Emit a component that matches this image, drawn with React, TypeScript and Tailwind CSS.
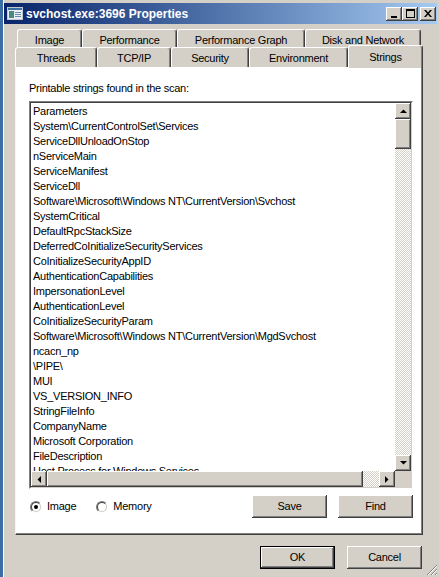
const face = "font-['Liberation_Sans',Arial,sans-serif] text-[11px] tracking-[-0.25px] text-black";

const strings = [
  "Parameters",
  "System\\CurrentControlSet\\Services",
  "ServiceDllUnloadOnStop",
  "nServiceMain",
  "ServiceManifest",
  "ServiceDll",
  "Software\\Microsoft\\Windows NT\\CurrentVersion\\Svchost",
  "SystemCritical",
  "DefaultRpcStackSize",
  "DeferredCoInitializeSecurityServices",
  "CoInitializeSecurityAppID",
  "AuthenticationCapabilities",
  "ImpersonationLevel",
  "AuthenticationLevel",
  "CoInitializeSecurityParam",
  "Software\\Microsoft\\Windows NT\\CurrentVersion\\MgdSvchost",
  "ncacn_np",
  "\\PIPE\\",
  "MUI",
  "VS_VERSION_INFO",
  "StringFileInfo",
  "CompanyName",
  "Microsoft Corporation",
  "FileDescription",
  "Host Process for Windows Services",
];

const topTabs = [
  { label: "Image", w: "w-[65px]" },
  { label: "Performance", w: "w-[95px]" },
  { label: "Performance Graph", w: "w-[128px]" },
  { label: "Disk and Network", w: "w-[116px]" },
];

const bottomTabs = [
  { label: "Threads", w: "w-[82px]" },
  { label: "TCP/IP", w: "w-[74px]" },
  { label: "Security", w: "w-[78px]" },
  { label: "Environment", w: "w-[99px]" },
];

// classic 3D bevel
const raised =
  "bg-[#d4d0c8] shadow-[inset_-1px_-1px_#404040,inset_1px_1px_#ffffff,inset_-2px_-2px_#808080]";

const Arrow = ({ dir }: { dir: "up" | "down" | "left" | "right" }) => {
  const pts = {
    up: "0,4 7,4 3.5,0.5",
    down: "0,0 7,0 3.5,3.5",
    left: "4,0 4,7 0.5,3.5",
    right: "0,0 0,7 3.5,3.5",
  }[dir];
  const vert = dir === "up" || dir === "down";
  return (
    <svg width={vert ? 7 : 4} height={vert ? 4 : 7} viewBox={vert ? "0 0 7 4" : "0 0 4 7"}>
      <polygon points={pts} fill="#000" />
    </svg>
  );
};

const ScrollBtn = ({ dir }: { dir: "up" | "down" | "left" | "right" }) => (
  <div className={`w-[16px] h-[16px] shrink-0 flex items-center justify-center ${raised}`}>
    <Arrow dir={dir} />
  </div>
);

const Track = ({ className = "" }: { className?: string }) => (
  <div
    className={`bg-[image:repeating-conic-gradient(#d4d0c8_0_25%,#ffffff_0_50%)] bg-[length:2px_2px] ${className}`}
  />
);

const Radio = ({ checked, label }: { checked?: boolean; label: string }) => (
  <div className="flex items-center gap-[5px]">
    <div className="w-[12px] h-[12px] rounded-full border border-t-[#808080] border-l-[#808080] border-b-[#ffffff] border-r-[#ffffff] bg-[#d4d0c8] flex items-center justify-center">
      <div className="w-[10px] h-[10px] rounded-full border border-t-[#404040] border-l-[#404040] border-b-[#d4d0c8] border-r-[#d4d0c8] bg-white flex items-center justify-center">
        {checked && <div className="w-[4px] h-[4px] rounded-full bg-black" />}
      </div>
    </div>
    <span>{label}</span>
  </div>
);

const Button = ({ label, isDefault }: { label: string; isDefault?: boolean }) => (
  <div className={`w-[75px] h-[23px] ${isDefault ? "border border-black" : ""}`}>
    <div className={`w-full h-full flex items-center justify-center ${raised}`}>{label}</div>
  </div>
);

const TitleIcon = () => (
  <svg width="16" height="13" viewBox="0 0 16 13">
    <rect x="0.5" y="0.5" width="15" height="12" fill="#e8eef4" stroke="#c0c8d0" />
    <rect x="1" y="1" width="14" height="2" fill="#3a6ea5" />
    <rect x="2" y="4" width="5" height="7" fill="#4a8a7a" />
    <rect x="8" y="5" width="6" height="1" fill="#6a8aa8" />
    <rect x="8" y="7" width="6" height="1" fill="#6a8aa8" />
    <rect x="8" y="9" width="6" height="1" fill="#6a8aa8" />
  </svg>
);

const CaptionBtn = ({ kind }: { kind: "min" | "max" | "close" }) => (
  <div className={`w-[16px] h-[14px] flex items-center justify-center ${raised}`}>
    {kind === "min" && (
      <svg width="8" height="9" viewBox="0 0 8 9">
        <rect x="1" y="7" width="6" height="2" fill="#000" />
      </svg>
    )}
    {kind === "max" && (
      <svg width="9" height="9" viewBox="0 0 9 9">
        <rect x="0.5" y="0.5" width="8" height="8" fill="none" stroke="#000" />
        <rect x="0" y="0" width="9" height="2" fill="#000" />
      </svg>
    )}
    {kind === "close" && (
      <svg width="8" height="7" viewBox="0 0 8 7">
        <path d="M0 0h2l2 2.5L6 0h2L5 3.5 8 7H6L4 4.5 2 7H0l3-3.5z" fill="#000" />
      </svg>
    )}
  </div>
);

const Tab = ({ label, w, h, pt }: { label: string; w: string; h: string; pt: string }) => (
  <div
    className={`${w} ${h} ${pt} shrink-0 flex justify-center items-center rounded-t-[3px] border-l border-t border-l-white border-t-white border-r border-r-[#404040] shadow-[inset_-1px_0_#808080] bg-[#d4d0c8]`}
  >
    {label}
  </div>
);

export default function App() {
  return (
    <div className={`w-[439px] h-[577px] bg-[#3a6ea5] flex overflow-hidden ${face}`}>
      <div className="relative ml-[3px] flex-1 flex flex-col bg-[#d4d0c8] shadow-[inset_1px_0_#ffffff]">
        {/* title bar */}
        <div className="mt-[3px] ml-[1px] mr-[2px] h-[21px] pl-[3px] flex items-center bg-gradient-to-r from-[#0a246a] to-[#a6caf0]">
          <TitleIcon />
          <span className="ml-[3px] font-bold text-[12px] tracking-normal text-white">
            svchost.exe:3696 Properties
          </span>
          <div className="ml-auto flex items-center mr-[1px]">
            <CaptionBtn kind="min" />
            <CaptionBtn kind="max" />
            <div className="ml-[2px]">
              <CaptionBtn kind="close" />
            </div>
          </div>
        </div>

        {/* tabs */}
        <div className="mt-[5px] ml-[14px] flex h-[18px]">
          {topTabs.map((t) => (
            <Tab key={t.label} label={t.label} w={t.w} h="h-[18px]" pt="pt-[3px]" />
          ))}
        </div>
        <div className="ml-[12px] flex h-[20px] items-end">
          {bottomTabs.map((t) => (
            <Tab key={t.label} label={t.label} w={t.w} h="h-[20px]" pt="pt-[2px]" />
          ))}
          <div className="relative z-10 w-[75px] h-[23px] shrink-0 flex justify-center items-start pt-[3px] rounded-t-[3px] border-l border-t border-l-white border-t-white border-r border-r-[#404040] shadow-[inset_-1px_0_#808080] bg-[#d4d0c8] mb-[-1px]">
            Strings
          </div>
        </div>

        {/* page */}
        <div className="ml-[12px] w-[408px] h-[468px] border-t border-l border-t-white border-l-[#f4f4f4] border-r border-b border-r-[#404040] border-b-[#404040] shadow-[inset_-1px_-1px_#808080] bg-white">
          <div className="pt-[13px] pl-[13px] pr-[10px] flex flex-col">
            <div className="h-[14px] leading-[14px]">Printable strings found in the scan:</div>

            {/* list box */}
            <div className="mt-[6px] w-[384px] h-[388px] border border-t-[#808080] border-l-[#808080] border-b-white border-r-white">
              <div className="w-full h-full border border-t-[#404040] border-l-[#404040] border-b-[#d4d0c8] border-r-[#d4d0c8] grid grid-cols-[364px_16px] grid-rows-[368px_16px]">
                <div className="overflow-hidden pl-[2px] pt-[1px] bg-white leading-[15px] whitespace-nowrap">
                  {strings.map((s, i) => (
                    <div key={i} className="h-[15px]">
                      {s}
                    </div>
                  ))}
                </div>
                <div className="flex flex-col">
                  <ScrollBtn dir="up" />
                  <div className={`h-[30px] shrink-0 ${raised}`} />
                  <Track className="flex-1" />
                  <ScrollBtn dir="down" />
                </div>
                <div className="flex">
                  <ScrollBtn dir="left" />
                  <div className={`w-[316px] shrink-0 ${raised}`} />
                  <Track className="flex-1" />
                  <ScrollBtn dir="right" />
                </div>
                <div className="bg-[#d4d0c8]" />
              </div>
            </div>

            {/* options + actions */}
            <div className="mt-[6px] w-[384px] h-[23px] flex items-center">
              <div className="flex-1 flex items-center pl-[1px] gap-[20px]">
                <Radio checked label="Image" />
                <Radio label="Memory" />
              </div>
              <div className="flex gap-[11px]">
                <Button label="Save" />
                <Button label="Find" />
              </div>
            </div>
          </div>
        </div>

        {/* dialog buttons */}
        <div className="mt-[11px] flex justify-end gap-[12px] pr-[17px]">
          <Button label="OK" isDefault />
          <Button label="Cancel" />
        </div>

        {/* size grip */}
        <svg className="absolute right-[1px] bottom-[1px]" width="12" height="12" viewBox="0 0 12 12">
          <path d="M11 1L1 11M11 5L5 11M11 9L9 11" stroke="#808080" strokeWidth="1" />
          <path d="M11 2L2 11M11 6L6 11M11 10L10 11" stroke="#ffffff" strokeWidth="1" />
        </svg>
      </div>
    </div>
  );
}
